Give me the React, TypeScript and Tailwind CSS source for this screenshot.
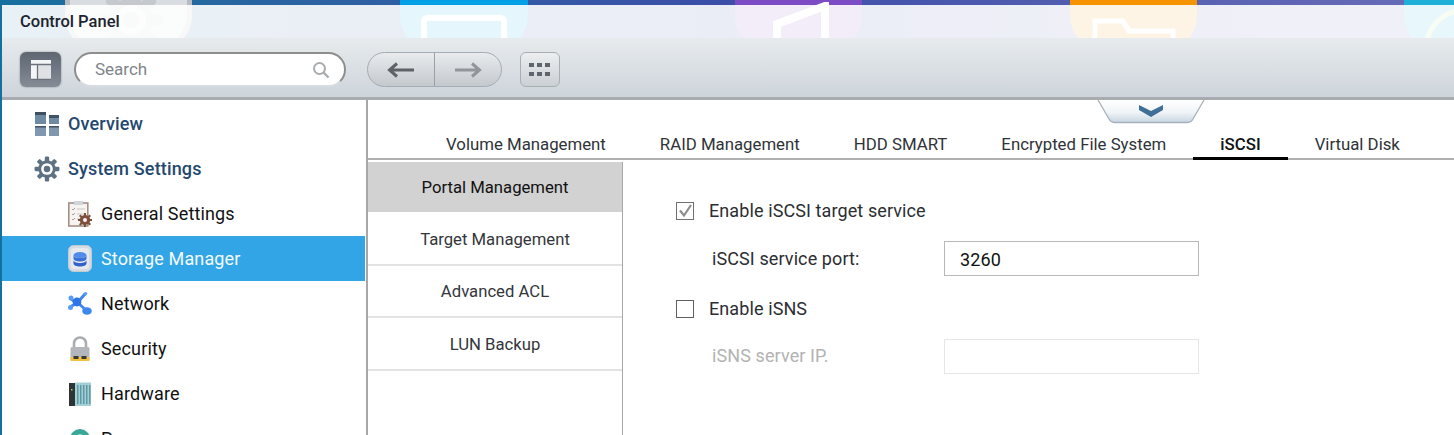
import React from "react";

const font = { fontFamily: "Roboto, 'Noto Sans', sans-serif" };

function OverviewIcon() {
  return (
    <svg width="24" height="24" viewBox="0 0 24 24">
      <rect x="0" y="0" width="11" height="12" fill="#6f8aa3" />
      <rect x="0" y="0" width="11" height="3" fill="#3f4f5f" />
      <rect x="14" y="3" width="10" height="9" fill="#6f8aa3" />
      <rect x="14" y="3" width="10" height="3" fill="#3f5366" />
      <rect x="0" y="14" width="11" height="10" fill="#7f98b0" />
      <rect x="0" y="14" width="11" height="1.500" fill="#3f5366" />
      <rect x="14" y="14" width="10" height="10" fill="#7f98b0" />
      <rect x="14" y="14" width="10" height="1.500" fill="#3f5366" />
    </svg>
  );
}

function Gear({ size, fill, hole }: { size: number; fill: string; hole: string }) {
  const teeth = [0, 45, 90, 135, 180, 225, 270, 315];
  return (
    <svg width={size} height={size} viewBox="0 0 24 24">
      {teeth.map((a) => (
        <rect key={a} x="10" y="0.500" width="4" height="6" rx="1" fill={fill} transform={`rotate(${a} 12 12)`} />
      ))}
      <circle cx="12" cy="12" r="8" fill={fill} />
      <circle cx="12" cy="12" r="5.400" fill="#ffffff" />
      <circle cx="12" cy="12" r="3" fill={hole} />
    </svg>
  );
}

function GeneralIcon() {
  return (
    <svg width="24" height="26" viewBox="0 0 24 26">
      <rect x="0.800" y="2" width="19" height="23" fill="#f6f3f1" stroke="#a58f87" strokeWidth="1.600" />
      <rect x="6" y="0" width="9" height="4" fill="#cfd5da" />
      <path d="M4 8l1 1 2-2M4 13l1 1 2-2M4 18l1 1 2-2" stroke="#9aa0a5" fill="none" />
      <path d="M9 8h8M9 13h8M9 18h3" stroke="#c6cace" strokeWidth="1.200" />
      <g transform="translate(10 12)">
        <path d="M6 0h2v2l2 1 1.500-1.500 1.500 1.500L11.500 4.500l.7 1.500h2v2h-2l-.7 1.500 1.500 1.500-1.500 1.500-1.500-1.500-2 .8V14H6v-2l-2-.8L2.500 12.700 1 11.200 2.500 9.700 1.800 8H0V6h1.800l.7-1.500L1 3l1.500-1.500L4 3l2-1z" fill="#7d4f3c" />
        <circle cx="7" cy="7" r="2" fill="#f6f3f1" />
      </g>
    </svg>
  );
}

function StorageIcon() {
  return (
    <svg width="24" height="27" viewBox="0 0 24 27">
      <rect x="0.500" y="0.500" width="23" height="26" rx="5" fill="#d5dbe3" stroke="#c3cad3" />
      <rect x="3" y="3" width="18" height="21" rx="3" fill="#e6eaef" />
      <ellipse cx="12" cy="10" rx="6.500" ry="3" fill="#4f8be8" />
      <path d="M5.500 10v3.500c0 1.700 3 3 6.500 3s6.500-1.300 6.500-3V10c0 1.700-3 3-6.500 3s-6.500-1.300-6.500-3z" fill="#3d6fd8" />
      <path d="M5.500 15v3.500c0 1.700 3 3 6.500 3s6.500-1.300 6.500-3V15c0 1.700-3 3-6.500 3s-6.500-1.300-6.500-3z" fill="#3560cc" />
    </svg>
  );
}

function NetworkIcon() {
  return (
    <svg width="24" height="24" viewBox="0 0 24 24">
      <path d="M3 7l6 4M17 2l-7 8M2 15l7-4M10 11l9 8" stroke="#3f87f0" strokeWidth="3" fill="none" />
      <circle cx="9" cy="10" r="4.400" fill="#2f74e6" />
      <ellipse cx="19" cy="19" rx="4.800" ry="3.800" fill="#3f87f0" />
      <circle cx="3" cy="6" r="2.500" fill="#5a9cf5" />
      <circle cx="2.500" cy="15.500" r="2.500" fill="#5a9cf5" />
      <circle cx="17.500" cy="1.800" r="1.800" fill="#5a9cf5" />
    </svg>
  );
}

function LockIcon() {
  return (
    <svg width="20" height="25" viewBox="0 0 20 25">
      <path d="M4 12V7.500a6 6 0 0 1 12 0V12" fill="none" stroke="#a9adb2" strokeWidth="2.600" />
      <rect x="0.500" y="11" width="19" height="14" rx="1.500" fill="#b3b6ba" />
      <rect x="0.500" y="21" width="19" height="4" rx="1" fill="#f2c23e" />
      <rect x="3.500" y="20" width="5" height="3" fill="#3a3a3a" />
      <rect x="11.500" y="20" width="5" height="3" fill="#3a3a3a" />
    </svg>
  );
}

function HardwareIcon() {
  return (
    <svg width="22" height="24" viewBox="0 0 22 24">
      <rect x="0" y="1" width="6" height="23" fill="#2f3336" />
      <rect x="2" y="7" width="1.500" height="1.500" fill="#9fd05a" />
      <path d="M6 0.500h16V24H6z" fill="#a3d0d6" />
      {[8, 11, 14, 17, 20].map((x) => (
        <rect key={x} x={x} y="3" width="1.500" height="19" fill="#5f99a3" />
      ))}
    </svg>
  );
}

function PowerIcon() {
  return (
    <svg width="20" height="24" viewBox="0 0 20 24">
      <circle cx="10" cy="12" r="10" fill="#3aa897" />
      <circle cx="10" cy="12" r="5" fill="#9ee0cf" />
    </svg>
  );
}

function LayoutIcon() {
  return (
    <svg width="20" height="20" viewBox="0 0 20 20">
      <path d="M0 0h20v20H0z" fill="#f4f5f6" />
      <path d="M7 5h13v14H7z" fill="#dfe2e5" />
      <path d="M0 4.500h20M6.500 4.500V20M0 19.500h20" stroke="#6b727c" strokeWidth="1.300" />
    </svg>
  );
}

function SearchIcon() {
  return (
    <svg width="18" height="18" viewBox="0 0 18 18" fill="none">
      <circle cx="7.500" cy="7.500" r="5.500" stroke="#a8abaf" strokeWidth="2" />
      <path d="M11.500 11.500l5 5" stroke="#a8abaf" strokeWidth="2.400" />
    </svg>
  );
}

function Arrow({ color, flip }: { color: string; flip?: boolean }) {
  return (
    <svg width="27" height="16" viewBox="0 0 27 16" fill="none" className={flip ? "rotate-180" : ""}>
      <path d="M27 8H3M10 1.500L2.500 8l7.500 6.500" stroke={color} strokeWidth="3" />
    </svg>
  );
}

function AppsIcon() {
  return (
    <svg width="22" height="16" viewBox="0 0 22 16" fill="#5f656c">
      {[0, 8, 16].map((x) => (
        <React.Fragment key={x}>
          <rect x={x} y="1" width="5" height="4" />
          <rect x={x} y="10" width="5" height="4" />
        </React.Fragment>
      ))}
    </svg>
  );
}

function HandleShape() {
  return (
    <svg width="108" height="24" viewBox="0 0 108 24">
      <defs>
        <linearGradient id="handle" x1="0" y1="0" x2="0" y2="1">
          <stop offset="0" stopColor="#ffffff" />
          <stop offset="0.55" stopColor="#f0f4f7" />
          <stop offset="1" stopColor="#c6d6e2" />
        </linearGradient>
      </defs>
      <path d="M1 0l11 19q2 3.500 5 3.500h74q3 0 5-3.500L107 0z" fill="url(#handle)" />
      <path d="M1 0l11 19q2 3.500 5 3.500h74q3 0 5-3.500L107 0" fill="none" stroke="#a9b2ba" strokeWidth="1.300" />
      <path d="M42 5l12 6 12-6v5l-12 7-12-7z" fill="#3f6f96" />
    </svg>
  );
}

const tabs = ["Volume Management", "RAID Management", "HDD SMART", "Encrypted File System", "iSCSI", "Virtual Disk"];
const subs = [
  { label: "Portal Management", cls: "h-[50px] pt-[1px] bg-[#d2d2d2] text-[#111111]" },
  { label: "Target Management", cls: "h-[54px] pt-[4px] border-b-2 border-[#e3e3e3] text-[#33363a]" },
  { label: "Advanced ACL", cls: "h-[52px] pt-[2px] border-b-2 border-[#e3e3e3] text-[#33363a]" },
  { label: "LUN Backup", cls: "h-[53px] pt-[3px] border-b-2 border-[#e3e3e3] text-[#33363a]" },
];

function NavRow({ icon, label, active, top }: { icon: React.ReactNode; label: string; active?: boolean; top?: boolean }) {
  return (
    <div
      className={`flex h-[45px] shrink-0 items-center tracking-[0.15px] ${top ? "pl-[32px] font-medium text-[#24486f]" : "pl-[65px]"} ${
        active ? "bg-[#32a5e6] text-[#f4fbff]" : top ? "" : "text-[#111111]"
      }`}
    >
      <span className="mr-[8px] flex w-[26px] items-center justify-center">{icon}</span>
      <span className="text-[18px]">{label}</span>
    </div>
  );
}

export default function App() {
  return (
    <div style={font} className="relative h-[435px] w-[1454px] overflow-hidden bg-gradient-to-r from-[#16709e] via-[#3b4ea8] to-[#6a6cb8]">
      <div className="absolute inset-x-0 top-0 h-[38px] overflow-hidden">
        <div className="absolute left-[65px] top-[-60px] flex h-[110px] w-[127px] items-end justify-center rounded-[34px] border-[5px] border-[#b8bcc0] bg-[#d9dce0]">
          <span className="mb-[-8px] ml-[4px] opacity-40">
            <Gear size={66} fill="#a8aeb4" hole="#a8aeb4" />
          </span>
        </div>
        <div className="absolute left-[400px] top-[-60px] h-[110px] w-[128px] rounded-[34px] bg-[#00a0e6]">
          <div className="absolute left-[21px] top-[75px] h-[60px] w-[86px] rounded-[6px] border-[6px] border-white" />
        </div>
        <div className="absolute left-[735px] top-[-60px] h-[110px] w-[127px] rounded-[34px] bg-[#7d4cc4]">
          <svg width="56" height="50" viewBox="0 0 56 50" className="absolute left-[38px] top-[62px]">
            <path d="M4 50V22L52 4v46" fill="none" stroke="#ffffff" strokeWidth="8" />
          </svg>
        </div>
        <div className="absolute left-[1070px] top-[-60px] h-[110px] w-[127px] rounded-[34px] bg-[#f59300]">
          <svg width="84" height="30" viewBox="0 0 84 30" className="absolute left-[22px] top-[78px]">
            <path d="M3 30V3h28l6 10h44v17" fill="none" stroke="#ffffff" strokeWidth="5" />
          </svg>
        </div>
        <div className="absolute left-[1404px] top-[-60px] h-[110px] w-[127px] rounded-[34px] bg-[#1eb0d8]">
          <div className="absolute left-[20px] top-[68px] h-[80px] w-[80px] rounded-full border-[5px] border-[#b8e986]" />
        </div>
      </div>

      <div className="relative ml-[2px] mt-[5px] flex flex-col">
        <div className="flex h-[33px] items-center bg-white/90 pl-[18px] pt-[1px] text-[16.500px] font-medium text-[#1c2430]">Control Panel</div>

        <div className="flex h-[62px] items-center border-b-[3px] border-[#a9acaf] bg-gradient-to-b from-[#e7ebed] to-[#cdd4db] pl-[18px] pt-[4px]">
          <button className="flex h-[35px] w-[41px] items-center justify-center rounded-[6px] bg-gradient-to-b from-[#5e6672] to-[#858c96] shadow-[0_0_2px_rgba(0,0,0,0.4)]">
            <LayoutIcon />
          </button>
          <div className="ml-[13px] flex h-[35px] w-[272px] items-center justify-between rounded-full border-2 border-[#8e8e8c] border-b-[#d8dce0] bg-white pl-[19px] pr-[14px] text-[17px] text-[#80858b]">
            <span className="pt-[1px]">Search</span>
            <SearchIcon />
          </div>
          <div className="ml-[21px] flex h-[35px] w-[135px] overflow-hidden rounded-full border border-[#a6acb3] bg-gradient-to-b from-[#e9ebed] to-[#c4c9ce]">
            <div className="flex w-[67px] items-center justify-center border-r border-[#9aa0a6] pr-[2px]">
              <Arrow color="#5e6368" />
            </div>
            <div className="flex flex-1 items-center justify-center">
              <Arrow color="#91969b" flip />
            </div>
          </div>
          <button className="ml-[18px] flex h-[35px] w-[40px] items-center justify-center rounded-[6px] border border-[#a9aeb4] bg-gradient-to-b from-[#eceef0] to-[#cbd0d5]">
            <AppsIcon />
          </button>
        </div>

        <div className="flex h-[335px] bg-white">
          <nav className="flex w-[363px] shrink-0 flex-col overflow-hidden pt-[1px]">
            <NavRow top icon={<OverviewIcon />} label="Overview" />
            <NavRow top icon={<Gear size={26} fill="#5d7183" hole="#5d7183" />} label="System Settings" />
            <NavRow icon={<GeneralIcon />} label="General Settings" />
            <NavRow active icon={<StorageIcon />} label="Storage Manager" />
            <NavRow icon={<NetworkIcon />} label="Network" />
            <NavRow icon={<LockIcon />} label="Security" />
            <NavRow icon={<HardwareIcon />} label="Hardware" />
            <NavRow icon={<PowerIcon />} label="Power" />
          </nav>

          <main className="relative ml-[1px] flex min-w-0 flex-1 flex-col border-l-2 border-[#a8a8a8]">
            <div className="absolute left-[729px] top-0">
              <HandleShape />
            </div>

            <div className="flex h-[60px] items-end border-b-2 border-[#b0b0b0] pl-[51px]">
              {tabs.map((t) => (
                <div
                  key={t}
                  className={`relative flex h-[28px] items-center whitespace-nowrap px-[27px] pt-[1px] text-[16.800px] ${
                    t === "iSCSI" ? "font-medium text-[#111111]" : "text-[#2f3338]"
                  }`}
                >
                  {t}
                  {t === "iSCSI" && <span className="absolute inset-x-0 bottom-[-2px] h-[3px] bg-black" />}
                </div>
              ))}
            </div>

            <div className="flex min-h-0 flex-1 pt-[2px]">
              <div className="flex w-[255px] shrink-0 flex-col border-r border-[#a8a8a8]">
                {subs.map((s) => (
                  <div key={s.label} className={`flex items-center justify-center text-[16.700px] ${s.cls}`}>
                    {s.label}
                  </div>
                ))}
              </div>

              <form className="flex flex-1 flex-col pl-[53px] pt-[39px] text-[18px] tracking-[0.1px] text-[#2b2e32]">
                <label className="flex h-[20px] items-center gap-[15px]">
                  <span className="flex h-[18px] w-[18px] items-center justify-center border-[1.500px] border-[#707070]">
                    <svg width="14" height="14" viewBox="0 0 14 14">
                      <path d="M2 6.500l4 5L13 1" fill="none" stroke="#8d8d8d" strokeWidth="2.200" />
                    </svg>
                  </span>
                  <span className="mb-[2px]">Enable iSCSI target service</span>
                </label>
                <div className="mt-[20px] flex h-[35px] items-center pl-[36px]">
                  <span className="w-[232px]">iSCSI service port:</span>
                  <div className="flex h-[35px] w-[255px] items-center border border-[#b8b8b8] pl-[15px] pt-[1px] text-[#111111]">3260</div>
                </div>
                <label className="mt-[23px] flex h-[20px] items-center gap-[15px]">
                  <span className="h-[18px] w-[18px] border-[1.500px] border-[#606060]" />
                  <span className="mb-[2px]">Enable iSNS</span>
                </label>
                <div className="mt-[20px] flex h-[35px] items-center pl-[36px] text-[#b3b3b3]">
                  <span className="mb-[2px] w-[232px]">iSNS server IP.</span>
                  <div className="h-[35px] w-[255px] border border-[#e6e6e6]" />
                </div>
              </form>
            </div>
          </main>
        </div>
      </div>
    </div>
  );
}
